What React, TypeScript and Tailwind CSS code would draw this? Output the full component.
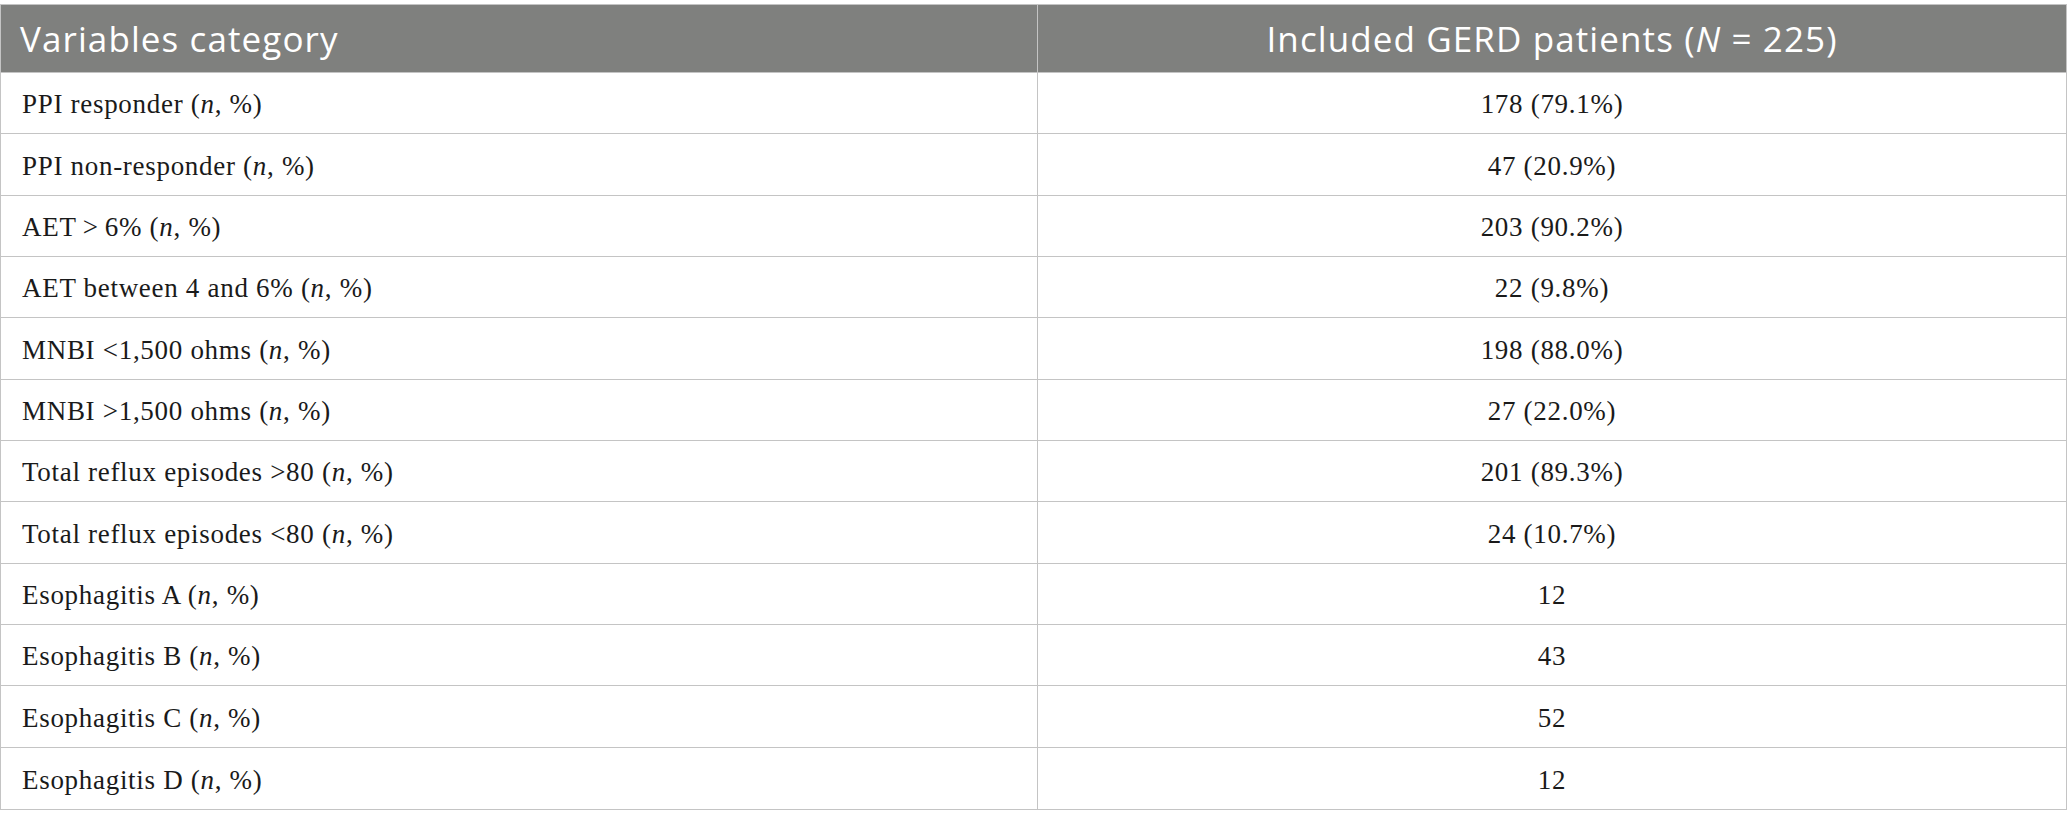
import React from "react";

type Row = { label: string; value: string };

const rows: Row[] = [
  { label: "PPI responder", value: "178 (79.1%)" },
  { label: "PPI non-responder", value: "47 (20.9%)" },
  { label: "AET\u2009>\u20096%", value: "203 (90.2%)" },
  { label: "AET between 4 and 6%", value: "22 (9.8%)" },
  { label: "MNBI <1,500 ohms", value: "198 (88.0%)" },
  { label: "MNBI >1,500 ohms", value: "27 (22.0%)" },
  { label: "Total reflux episodes >80", value: "201 (89.3%)" },
  { label: "Total reflux episodes <80", value: "24 (10.7%)" },
  { label: "Esophagitis A", value: "12" },
  { label: "Esophagitis B", value: "43" },
  { label: "Esophagitis C", value: "52" },
  { label: "Esophagitis D", value: "12" },
];

export default function App() {
  return (
    <main className="min-h-screen bg-white pt-1">
      <div className="w-[2067px] border border-[#c4c4c4]">
        {/* Header */}
        <div className="grid grid-cols-[1037px_1fr] h-[68px] bg-[#7f807e] border-b border-[#c4c4c4] text-white font-['Open_Sans',sans-serif] text-[35px] tracking-[1.1px]">
          <div className="flex items-center pl-[19px] pt-[1px] border-r border-[#c4c4c4]">Variables category</div>
          <div className="flex items-center justify-center pt-[1px]">
            <span>
              Included GERD patients (<i>N</i> = 225)
            </span>
          </div>
        </div>

        {/* Body */}
        {rows.map((r, i) => (
          <div
            key={i}
            className={`grid grid-cols-[1037px_1fr] h-[61.33px] font-['Liberation_Serif',serif] text-[27px] tracking-[0.7px] text-[#1a1a1a] ${
              i < rows.length - 1 ? "border-b border-[#c4c4c4]" : ""
            }`}
          >
            <div className="flex items-center pl-[21px] pt-[3px] border-r border-[#c4c4c4]">
              <span>
                {r.label} (<i>n</i>, %)
              </span>
            </div>
            <div className="flex items-center justify-center pt-[3px]">{r.value}</div>
          </div>
        ))}
      </div>
    </main>
  );
}
